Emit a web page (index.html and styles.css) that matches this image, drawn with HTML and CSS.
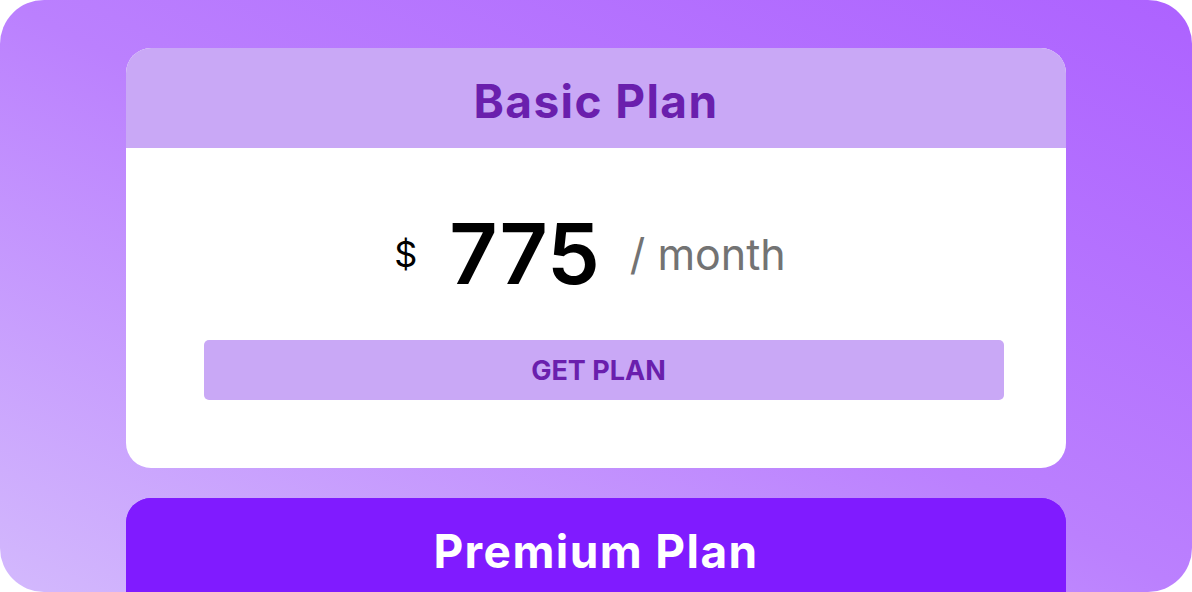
FILE: index.html
```html
<!DOCTYPE html>
<html>
<head>
<meta charset="utf-8">
<link rel="stylesheet" href="styles.css">
</head>
<body>
<div class="frame">
  <div class="card">
    <div class="card-head basic">Basic Plan</div>
    <div class="card-body">
      <div class="price">
        <span class="cur">$</span>
        <span class="amount">775</span>
        <span class="per">/ month</span>
      </div>
      <button class="btn">GET PLAN</button>
    </div>
  </div>
  <div class="card card-premium">
    <div class="card-head premium">Premium Plan</div>
  </div>
</div>
</body>
</html>
```
FILE: styles.css
```css
html, body {
  margin: 0;
  padding: 0;
  background: #ffffff;
}
body {
  font-family: Inter, "Noto Sans", sans-serif;
}
.frame {
  width: 1192px;
  height: 592px;
  box-sizing: border-box;
  border-radius: 44px;
  overflow: hidden;
  background: linear-gradient(to top right, #d3b9fd 0%, #bb80fe 50%, #ad62ff 100%);
  padding-top: 48px;
  display: flex;
  flex-direction: column;
  align-items: center;
  gap: 30px;
}
.card {
  width: 940px;
  flex: none;
  border-radius: 25px;
  overflow: hidden;
  background: #ffffff;
}
.card-premium {
  min-height: 160px;
  background: #801bff;
}
.card-head {
  height: 100px;
  box-sizing: border-box;
  padding-top: 5px;
  display: flex;
  align-items: center;
  justify-content: center;
  font-size: 46px;
  font-weight: 700;
  letter-spacing: 1.4px;
}
.card-head.basic {
  background: #c9a8f6;
  color: #6a1fad;
}
.card-head.premium {
  background: #801bff;
  color: #ffffff;
}
.card-body {
  display: flex;
  flex-direction: column;
  align-items: center;
  padding: 62px 0 68px;
}
.price {
  display: flex;
  align-items: center;
  height: 88px;
  line-height: 1;
  margin-right: 12px;
  margin-bottom: 42px;
}
.cur {
  font-size: 36px;
  font-weight: 400;
  color: #000;
  margin-right: 32px;
}
.amount {
  font-size: 84px;
  font-weight: 600;
  color: #000;
  margin-right: 30px;
}
.per {
  font-size: 43px;
  font-weight: 400;
  color: #737373;
}
.btn {
  width: 800px;
  height: 60px;
  margin-left: 16px;
  padding: 0 11px 0 0;
  border: none;
  border-radius: 5px;
  background: #c9a8f6;
  color: #6a1fad;
  font-family: Inter, "Noto Sans", sans-serif;
  font-size: 27px;
  font-weight: 700;
}
```
